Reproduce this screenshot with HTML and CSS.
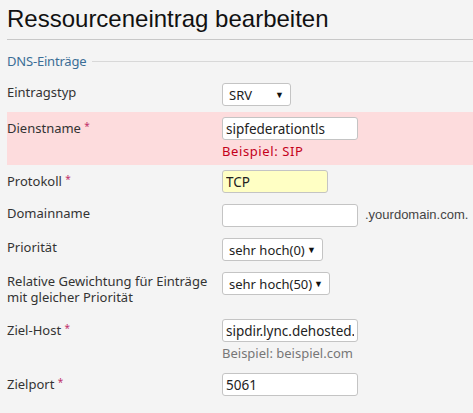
FILE: index.html
```html
<!DOCTYPE html>
<html lang="de">
<head>
  <meta charset="UTF-8" />
  <title>Ressourceneintrag bearbeiten</title>
  <link rel="stylesheet" href="styles.css">
</head>
<body>

  <h1>Ressourceneintrag bearbeiten</h1>

  <fieldset class="gruppe">
    <legend>DNS-Einträge</legend>

    <div class="zeile">
      <label>Eintragstyp</label>
      <div class="feld">
        <div class="auswahl breite-srv"><span>SRV</span><span class="pfeil">▼</span></div>
      </div>
    </div>

    <div class="zeile fehler">
      <label>Dienstname <span class="pflicht">*</span></label>
      <div class="feld">
        <input type="text" value="sipfederationtls" />
        <div class="hinweis rot">Beispiel: SIP</div>
      </div>
    </div>

    <div class="zeile">
      <label>Protokoll <span class="pflicht">*</span></label>
      <div class="feld">
        <input type="text" class="gelb" value="TCP" />
      </div>
    </div>

    <div class="zeile">
      <label>Domainname</label>
      <div class="feld inline">
        <input type="text" value="" />
        <span class="suffix">.yourdomain.com.</span>
      </div>
    </div>

    <div class="zeile">
      <label>Priorität</label>
      <div class="feld">
        <div class="auswahl breite-prio"><span>sehr hoch(0)</span><span class="pfeil">▼</span></div>
      </div>
    </div>

    <div class="zeile">
      <label>Relative Gewichtung für Einträge mit gleicher Priorität</label>
      <div class="feld">
        <div class="auswahl breite-gew"><span>sehr hoch(50)</span><span class="pfeil">▼</span></div>
      </div>
    </div>

    <div class="zeile">
      <label>Ziel-Host <span class="pflicht">*</span></label>
      <div class="feld">
        <input type="text" value="sipdir.lync.dehosted.net" />
        <div class="hinweis">Beispiel: beispiel.com</div>
      </div>
    </div>

    <div class="zeile">
      <label>Zielport <span class="pflicht">*</span></label>
      <div class="feld">
        <input type="text" value="5061" />
      </div>
    </div>
  </fieldset>

</body>
</html>
```

FILE: styles.css
```css
body {
  margin: 0;
  padding: 0 0 0 7px;
  background: #f4f4f4;
  font-family: "Noto Sans", sans-serif;
  font-size: 13px;
  color: #333;
}

h1 {
  margin: 0;
  padding: 5px 0 6px;
  font-family: "Liberation Sans", Arial, sans-serif;
  font-weight: normal;
  font-size: 24px;
  color: #111;
  border-bottom: 1px solid #c8c8c8;
}

.gruppe {
  border: none;
  margin: 0;
  padding: 0;
}

.gruppe legend {
  display: flex;
  align-items: center;
  width: 100%;
  padding: 12px 0 8px;
  color: #3b6e96;
  font-size: 13px;
  letter-spacing: -0.2px;
}

.gruppe legend::after {
  content: "";
  flex: 1;
  border-top: 1px solid #d8d8d8;
  margin-left: 6px;
}

.zeile {
  display: flex;
  padding: 5px 0 6px;
}

.zeile label {
  width: 215px;
  flex: none;
  padding: 1px 10px 3px 0;
  box-sizing: border-box;
  line-height: 16px;
}

.fehler {
  background: #fddcdd;
  padding-bottom: 5px;
}

.pflicht {
  color: #c0306a;
  font-size: 10px;
  vertical-align: 3px;
}

.feld.inline {
  display: flex;
  align-items: flex-start;
}

input {
  display: block;
  width: 136px;
  height: 23px;
  box-sizing: border-box;
  padding: 2px 3px;
  border: 1px solid #c4c4c4;
  border-radius: 3px;
  background: #fff;
  font-family: inherit;
  font-size: 13.5px;
  color: #222;
}

input.gelb {
  width: 106px;
  background: #ffffc4;
}

.suffix {
  margin-left: 7px;
  padding-top: 3px;
  font-family: "Liberation Sans", Arial, sans-serif;
  color: #444;
}

.auswahl {
  display: flex;
  justify-content: space-between;
  align-items: center;
  height: 23px;
  box-sizing: border-box;
  padding: 0 6px;
  border: 1px solid #c4c4c4;
  border-radius: 3px;
  background: #fff;
  font-size: 13px;
  white-space: nowrap;
  color: #222;
}

.pfeil {
  font-size: 9px;
  color: #111;
}

.breite-srv { width: 69px; }
.breite-prio { width: 101px; }
.breite-gew { width: 108px; }

.hinweis {
  margin-top: 3px;
  line-height: 17px;
  color: #777;
}

.hinweis.rot {
  color: #c4001a;
  letter-spacing: 0.6px;
}
```
